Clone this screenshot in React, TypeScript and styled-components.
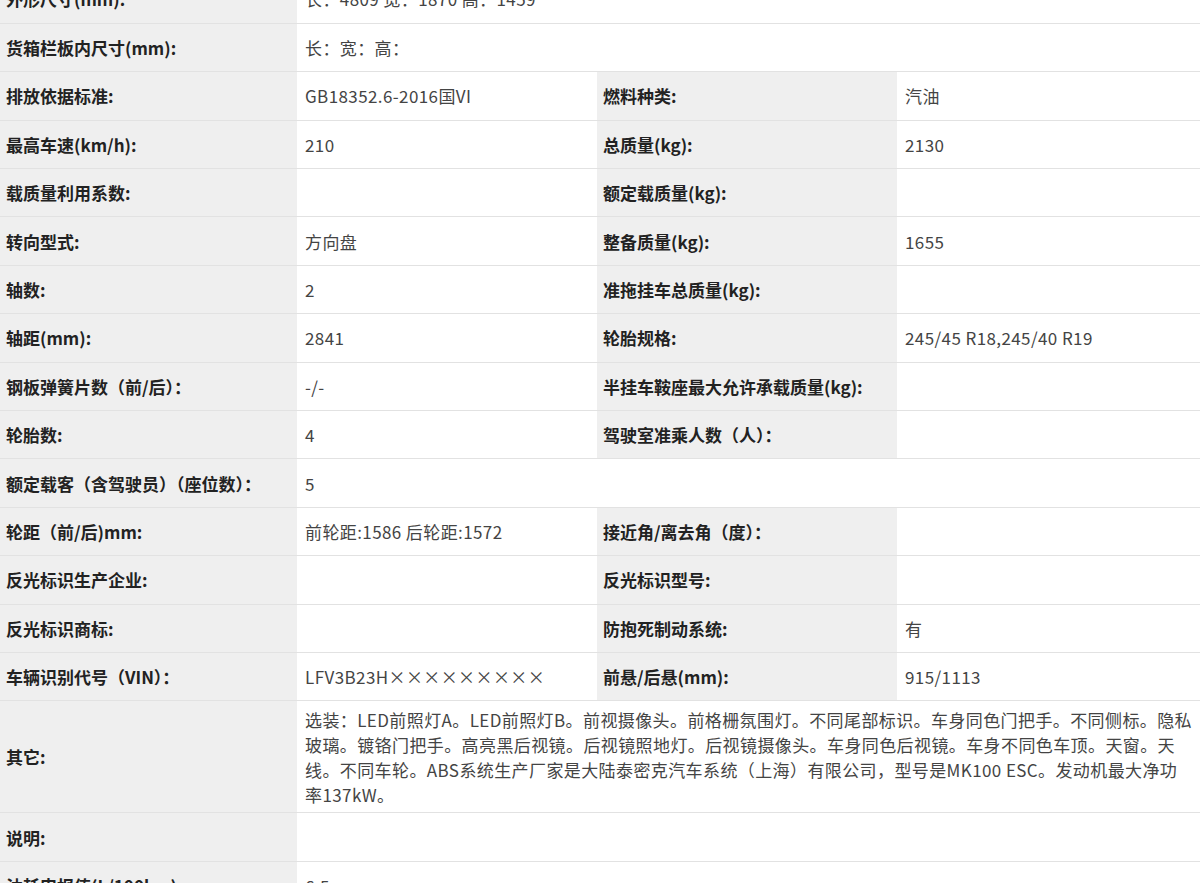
import React from "react";
import styled, { createGlobalStyle } from "styled-components";

const Global = createGlobalStyle`
  body {
    margin: 0;
    background: #fff;
    font-family: "Noto Sans CJK SC", "Liberation Sans", sans-serif;
    overflow: hidden;
  }
`;

type Cell = { label: string; value: string };
type Row = Cell[];

const rows: Row[] = [
  [{ label: "外形尺寸(mm):", value: "长：4809 宽：1870 高：1459" }],
  [{ label: "货箱栏板内尺寸(mm):", value: "长：宽：高：" }],
  [
    { label: "排放依据标准:", value: "GB18352.6-2016国VI" },
    { label: "燃料种类:", value: "汽油" },
  ],
  [
    { label: "最高车速(km/h):", value: "210" },
    { label: "总质量(kg):", value: "2130" },
  ],
  [
    { label: "载质量利用系数:", value: "" },
    { label: "额定载质量(kg):", value: "" },
  ],
  [
    { label: "转向型式:", value: "方向盘" },
    { label: "整备质量(kg):", value: "1655" },
  ],
  [
    { label: "轴数:", value: "2" },
    { label: "准拖挂车总质量(kg):", value: "" },
  ],
  [
    { label: "轴距(mm):", value: "2841" },
    { label: "轮胎规格:", value: "245/45 R18,245/40 R19" },
  ],
  [
    { label: "钢板弹簧片数（前/后）：", value: "-/-" },
    { label: "半挂车鞍座最大允许承载质量(kg):", value: "" },
  ],
  [
    { label: "轮胎数:", value: "4" },
    { label: "驾驶室准乘人数（人）：", value: "" },
  ],
  [{ label: "额定载客（含驾驶员）（座位数）：", value: "5" }],
  [
    { label: "轮距（前/后)mm:", value: "前轮距:1586 后轮距:1572" },
    { label: "接近角/离去角（度）：", value: "" },
  ],
  [
    { label: "反光标识生产企业:", value: "" },
    { label: "反光标识型号:", value: "" },
  ],
  [
    { label: "反光标识商标:", value: "" },
    { label: "防抱死制动系统:", value: "有" },
  ],
  [
    { label: "车辆识别代号（VIN）：", value: "LFV3B23H×××××××××" },
    { label: "前悬/后悬(mm):", value: "915/1113" },
  ],
  [
    {
      label: "其它:",
      value:
        "选装：LED前照灯A。LED前照灯B。前视摄像头。前格栅氛围灯。不同尾部标识。车身同色门把手。不同侧标。隐私玻璃。镀铬门把手。高亮黑后视镜。后视镜照地灯。后视镜摄像头。车身同色后视镜。车身不同色车顶。天窗。天线。不同车轮。ABS系统生产厂家是大陆泰密克汽车系统（上海）有限公司，型号是MK100 ESC。发动机最大净功率137kW。",
    },
  ],
  [{ label: "说明:", value: "" }],
  [{ label: "油耗申报值(L/100km):", value: "6.5" }],
];

const Page = styled.div`
  margin-top: -25px;
`;

const Table = styled.table`
  width: 1200px;
  border-collapse: collapse;
  table-layout: fixed;
`;

const Col = styled.col<{ $w: number }>`
  width: ${(p) => p.$w}px;
`;

const Tr = styled.tr<{ $tall?: boolean }>`
  height: ${(p) => (p.$tall ? "112px" : "48.4px")};
`;

const Label = styled.td`
  background: #efefef;
  border-bottom: 1px solid #e2e2e2;
  padding: 0 0 0 6px;
  font-size: 17px;
  font-weight: 700;
  color: #222;
  white-space: nowrap;
`;

const Value = styled.td`
  background: #fff;
  border-bottom: 1px solid #e2e2e2;
  padding: 4px 6px 4px 8px;
  font-family: "Noto Sans CJK SC", sans-serif;
  font-size: 17px;
  line-height: 25px;
  letter-spacing: 0.4px;
  color: #444;
`;

export default function App() {
  return (
    <Page>
      <Global />
      <Table>
        <colgroup>
          <Col $w={297} />
          <Col $w={300} />
          <Col $w={300} />
          <Col $w={303} />
        </colgroup>
        <tbody>
          {rows.map((row, i) => (
            <Tr key={i} $tall={row[0].label === "其它:"}>
              {row.map((c, j) => (
                <React.Fragment key={j}>
                  <Label>{c.label}</Label>
                  <Value colSpan={row.length === 1 ? 3 : 1}>{c.value}</Value>
                </React.Fragment>
              ))}
            </Tr>
          ))}
        </tbody>
      </Table>
    </Page>
  );
}
